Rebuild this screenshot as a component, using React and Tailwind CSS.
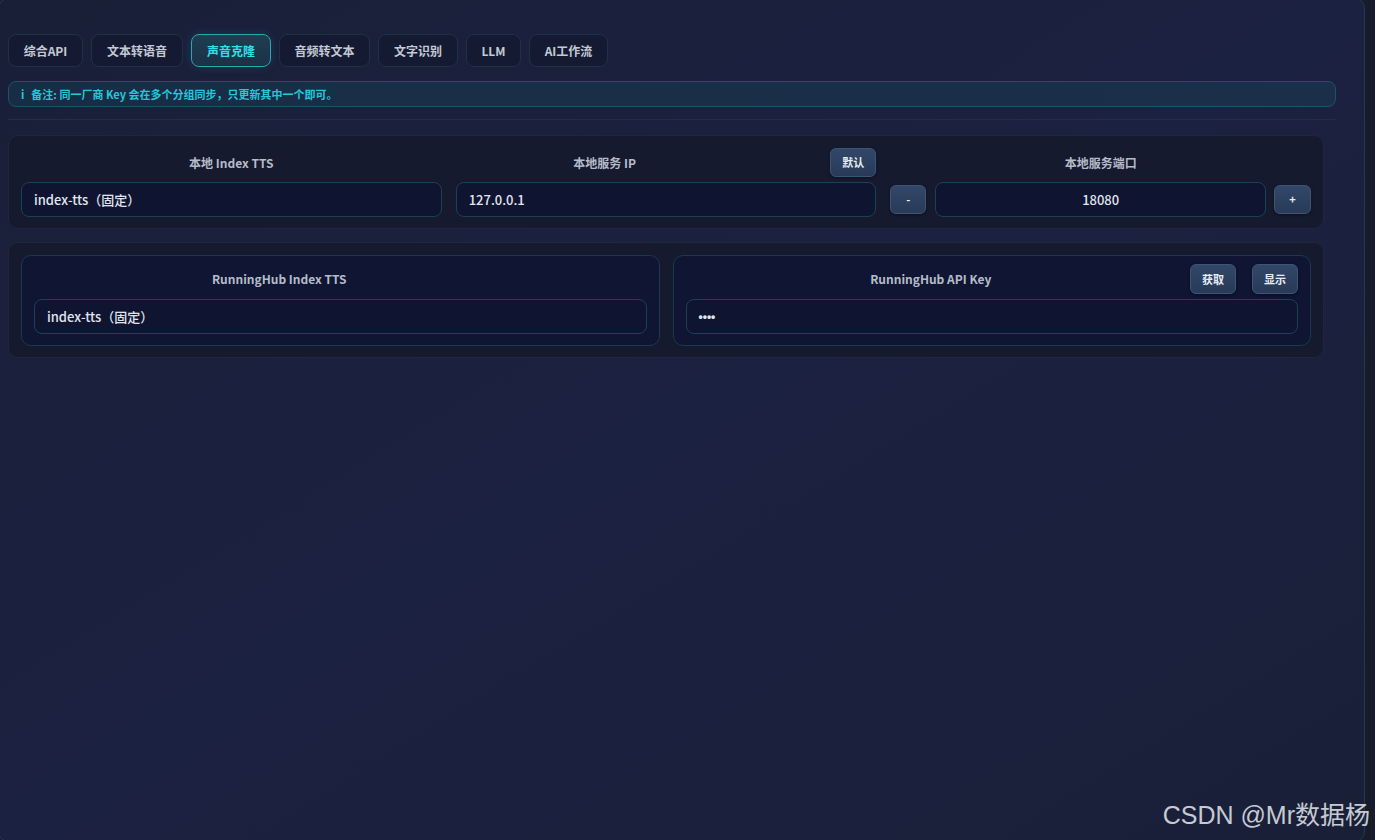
const tabs = [
  ['综合API', 'w-[75px]'],
  ['文本转语音', 'w-[92px]'],
  ['声音克隆', 'w-[80px]'],
  ['音频转文本', 'w-[91px]'],
  ['文字识别', 'w-[80px]'],
  ['LLM', 'w-[55px]'],
  ['AI工作流', 'w-[79px]'],
];

const font = { fontFamily: '"Noto Sans CJK SC", "Noto Sans", sans-serif' };

function SmallButton({ children, className = '' }) {
  return (
    <button
      type="button"
      className={`flex items-center justify-center rounded-md border border-[#3e5476] bg-gradient-to-b from-[#324768] to-[#283a58] text-[11px] font-bold text-[#e8edf5] shadow-[0_1px_3px_rgba(0,0,0,0.4)] ${className}`}
    >
      {children}
    </button>
  );
}

function Field({ value, center = false, className = '' }) {
  return (
    <div
      className={`flex h-[35px] items-center rounded-lg border border-[#1b4254] bg-[#0f1430] px-3 text-[13px] font-medium text-[#e1e6ef] ${center ? 'justify-center' : ''} ${className}`}
    >
      {value}
    </div>
  );
}

function Label({ children, className = '' }) {
  return <div className={`text-center text-[12px] font-bold text-[#b5bcc9] ${className}`}>{children}</div>;
}

export default function App() {
  return (
    <div className="relative h-[840px] w-[1375px] overflow-hidden bg-[#171b2c]" style={font}>
      <div className="-ml-[2px] -mt-[2px] h-[844px] w-[1367px] rounded-[10px] border border-[#1d3d4c] bg-gradient-to-br from-[#1a1f38] via-[#1b2140] to-[#1a1f38] pl-[9px] pt-[35px]">
        {/* Tabs */}
        <div className="flex gap-2">
          {tabs.map(([t, w]) => {
            const active = t === '声音克隆';
            return (
              <button
                key={t}
                type="button"
                className={
                  active
                    ? `h-[33px] ${w} rounded-lg border border-[#2aa6b5] bg-gradient-to-b from-[#1f3e52] to-[#1b3146] text-[12px] font-bold text-[#2fe0ef] shadow-[0_0_10px_rgba(34,211,238,0.15)]`
                    : `h-[33px] ${w} rounded-lg border border-[#1e3247] bg-[#131a32] text-[12px] font-bold text-[#c4c9d4]`
                }
              >
                {t}
              </button>
            );
          })}
        </div>

        {/* Notice */}
        <div className="mt-[14px] flex h-[26px] w-[1328px] items-center rounded-lg border border-[#1f5266] bg-gradient-to-r from-[#182d45] to-[#1b2f4a] pl-3 text-[11px] font-bold text-[#22c8dc]">
          <span className="mr-[7px]">i</span>
          <span>备注: 同一厂商 Key 会在多个分组同步，只更新其中一个即可。</span>
        </div>

        <div className="mt-3 h-px w-[1328px] bg-[#222e47]" />

        {/* Local card */}
        <div className="mt-[15px] w-[1316px] rounded-[10px] border border-[#1d283e] bg-[#151a2e] p-3 pb-[11px]">
          <div className="grid grid-cols-3 gap-[14px]">
            <div className="flex flex-col">
              <div className="flex h-[29px] items-center justify-center">
                <Label>本地 Index TTS</Label>
              </div>
              <Field value="index-tts（固定）" className="mt-[5px]" />
            </div>
            <div className="flex flex-col">
              <div className="flex h-[29px] items-center">
                <Label className="w-[298px]">本地服务 IP</Label>
                <div className="flex flex-1 justify-end">
                  <SmallButton className="h-[29px] w-[46px]">默认</SmallButton>
                </div>
              </div>
              <Field value="127.0.0.1" className="mt-[5px]" />
            </div>
            <div className="flex flex-col">
              <div className="flex h-[29px] items-center justify-center">
                <Label>本地服务端口</Label>
              </div>
              <div className="mt-[5px] flex items-center">
                <SmallButton className="h-[29px] w-[36px]">-</SmallButton>
                <Field value="18080" center className="ml-[9px] flex-1" />
                <SmallButton className="ml-2 h-[29px] w-[37px]">+</SmallButton>
              </div>
            </div>
          </div>
        </div>

        {/* RunningHub card */}
        <div className="mt-[13px] w-[1316px] rounded-[10px] border border-[#1d283e] bg-[#151a2e] p-3 pb-[11px]">
          <div className="grid grid-cols-2 gap-[13px]">
            <div className="rounded-[10px] border border-[#1a3a4c] bg-[#0f1532] px-3 pb-[11px] pt-2">
              <div className="flex h-[30px] items-center">
                <Label className="flex-1">RunningHub Index TTS</Label>
                <div className="ml-[14px] w-[108px]" />
              </div>
              <Field value="index-tts（固定）" className="mt-[5px]" />
            </div>
            <div className="rounded-[10px] border border-[#1a3a4c] bg-[#0f1532] px-3 pb-[11px] pt-2">
              <div className="flex h-[30px] items-center">
                <Label className="flex-1">RunningHub API Key</Label>
                <div className="ml-[14px] flex w-[108px] justify-between">
                  <SmallButton className="h-[30px] w-[46px]">获取</SmallButton>
                  <SmallButton className="h-[30px] w-[46px]">显示</SmallButton>
                </div>
              </div>
              <Field
                value={<span className="font-['Liberation_Sans'] text-[12px] font-bold">••••</span>}
                className="mt-[5px] bg-[#0d1229]"
              />
            </div>
          </div>
        </div>
      </div>

      {/* Watermark */}
      <div
        className="absolute right-[5px] top-[803px] text-[25px] leading-none text-[#c6cad2]"
        style={{ fontFamily: '"Liberation Sans", "Noto Sans CJK SC", sans-serif' }}
      >
        CSDN @Mr数据杨
      </div>
    </div>
  );
}
